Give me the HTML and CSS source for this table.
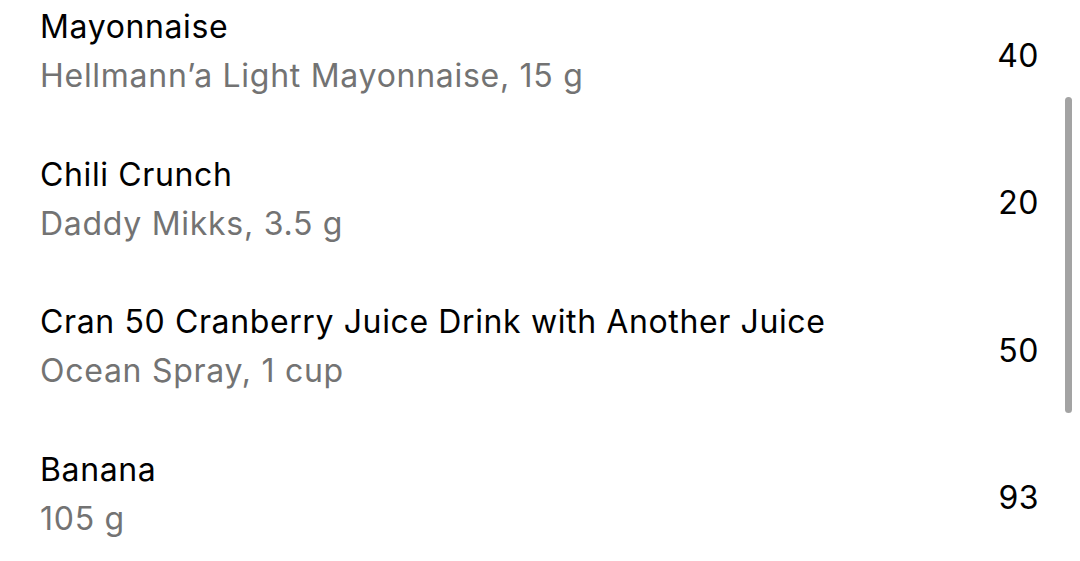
FILE: index.html
```html
<!DOCTYPE html>
<html>
<head>
<meta charset="utf-8">
<link rel="stylesheet" href="styles.css">
</head>
<body>
<div class="list">
  <div class="row">
    <div class="text">
      <div class="title">Mayonnaise</div>
      <div class="sub">Hellmann’a Light Mayonnaise, 15 g</div>
    </div>
    <div class="num">40</div>
  </div>
  <div class="row">
    <div class="text">
      <div class="title">Chili Crunch</div>
      <div class="sub">Daddy Mikks, 3.5 g</div>
    </div>
    <div class="num">20</div>
  </div>
  <div class="row">
    <div class="text">
      <div class="title">Cran 50 Cranberry Juice Drink with Another Juice</div>
      <div class="sub">Ocean Spray, 1 cup</div>
    </div>
    <div class="num">50</div>
  </div>
  <div class="row">
    <div class="text">
      <div class="title">Banana</div>
      <div class="sub">105 g</div>
    </div>
    <div class="num">93</div>
  </div>
</div>
<div class="scrollbar"></div>
</body>
</html>
```
FILE: styles.css
```css
html, body {
  margin: 0;
  padding: 0;
  background: #ffffff;
  width: 1080px;
  height: 561px;
  overflow: hidden;
}
body {
  font-family: Inter, "Noto Sans", sans-serif;
  color: #000;
  position: relative;
}
.list {
  display: flex;
  flex-direction: column;
  gap: 49.5px;
  padding: 2px 41px 0 40px;
}
.row {
  display: flex;
  align-items: center;
  justify-content: space-between;
}
.title {
  font-size: 32px;
  line-height: 49px;
  letter-spacing: 0.62px;
  color: #000;
}
.sub {
  font-size: 32px;
  line-height: 49px;
  letter-spacing: 0.72px;
  color: #737373;
}
.num {
  font-size: 32px;
  line-height: 49px;
  letter-spacing: 0.5px;
  padding-top: 8px;
  color: #000;
}
.scrollbar {
  position: absolute;
  left: 1065px;
  top: 97px;
  width: 7px;
  height: 316px;
  border-radius: 4px;
  background: #a3a3a3;
}
```
